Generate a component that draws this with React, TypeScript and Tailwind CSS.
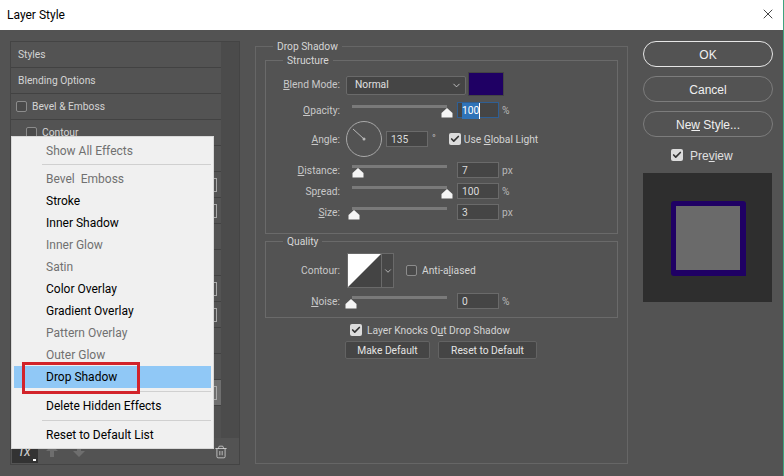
import type { ReactNode } from 'react'
import { X, Check, ChevronDown, Trash2 } from 'lucide-react'

// rows under the open menu keep only what still shows beside it
const listRows = [
  { name: 'styles', label: 'Styles' },
  { name: 'blending', label: 'Blending Options' },
  { name: 'bevel', label: 'Bevel & Emboss', box: true },
  { name: 'contour', label: 'Contour', box: true, indent: true },
  { name: 'texture' },
  { name: 'stroke', plus: true },
  { name: 'inner-shadow', plus: true },
  { name: 'inner-glow' },
  { name: 'satin' },
  { name: 'color-overlay', plus: true },
  { name: 'gradient-overlay', plus: true },
  { name: 'pattern-overlay' },
  { name: 'outer-glow' },
  { name: 'drop-shadow', plus: true, selected: true },
]

const effectItems = [
  { label: 'Bevel  Emboss', off: true },
  { label: 'Stroke' },
  { label: 'Inner Shadow' },
  { label: 'Inner Glow', off: true },
  { label: 'Satin', off: true },
  { label: 'Color Overlay' },
  { label: 'Gradient Overlay' },
  { label: 'Pattern Overlay', off: true },
  { label: 'Outer Glow', off: true },
  { label: 'Drop Shadow', active: true },
]

function CheckBox({ checked = false }: { checked?: boolean }) {
  if (checked) {
    return (
      <span className="flex h-[12px] w-[12px] shrink-0 items-center justify-center rounded-[2px] bg-[#dcdcdc]">
        <Check size={10} strokeWidth={4} className="text-[#333]" />
      </span>
    )
  }
  return <span className="h-[11px] w-[11px] shrink-0 rounded-[2px] border border-[#8c8c8c] bg-[#4a4a4a]" />
}

function Slider({ thumb }: { thumb: string }) {
  return (
    <div className="relative ml-[11px] mt-[3px] h-[3px] w-[95px] self-start bg-[#7a7a7a]">
      <svg width="12" height="10" viewBox="0 0 12 10" className={`absolute top-[3px] ${thumb}`}>
        <path d="M6 0 L11.5 5 V9.5 H0.5 V5 Z" fill="#f4f4f4" />
      </svg>
    </div>
  )
}

function Field({ value, focused = false }: { value: string; focused?: boolean }) {
  return (
    <div
      className={`flex h-[16px] w-[42px] items-center border bg-[#454545] pl-[4px] pt-[2px] text-[#dcdcdc] ${
        focused ? 'border-[#2f5f94]' : 'border-[#6a6a6a]'
      }`}
    >
      {focused ? <span className="border-r border-white bg-[#2f73b8] text-white">{value}</span> : value}
    </div>
  )
}

function Label({ before, u, after }: { before?: string; u: string; after: string }) {
  return (
    <span className="w-[75px] shrink-0 pr-px pt-[2px] text-right text-[#c8c8c8]">
      {before}
      <span className="underline">{u}</span>
      {after}
    </span>
  )
}

function SliderRow({
  label,
  value,
  unit,
  thumb,
  focused,
  className,
}: {
  label: ReactNode
  value: string
  unit: string
  thumb: string
  focused?: boolean
  className: string
}) {
  return (
    <div className={`flex h-[16px] items-center ${className}`}>
      {label}
      <Slider thumb={thumb} />
      <div className="ml-[10px]">
        <Field value={value} focused={focused} />
      </div>
      <span className="ml-[3px] pt-[2px] text-[#b8b8b8]">{unit}</span>
    </div>
  )
}

function Legend({ title, className }: { title: string; className: string }) {
  return <span className={`absolute bg-[#535353] px-[4px] leading-[14px] text-[#d6d6d6] ${className}`}>{title}</span>
}

function SideButton({ children, strong = false }: { children: ReactNode; strong?: boolean }) {
  return (
    <div
      className={`flex h-[26px] w-[130px] items-center justify-center rounded-[13px] border pt-[2px] font-['Liberation_Sans',sans-serif] text-[12px] text-[#f0f0f0] ${
        strong ? 'border-[#e6e6e6]' : 'border-[#7c7c7c]'
      }`}
    >
      {children}
    </div>
  )
}

function PlainButton({ children, width }: { children: ReactNode; width: string }) {
  return (
    <div className={`flex h-[18px] items-center justify-center rounded-[2px] border border-[#636363] bg-[#454545] pt-[2px] text-[#e4e4e4] ${width}`}>
      {children}
    </div>
  )
}

function EffectsMenu() {
  return (
    <div className="absolute left-[11px] top-[136px] flex h-[313px] w-[203px] flex-col border border-[#d8d8d8] bg-[#f0f0f0] px-[2px] pt-[2px] font-['Roboto',sans-serif] text-[12px] text-black">
      <div className="flex h-[25px] items-center pb-[2px] pl-[32px] text-[#707070]">Show All Effects</div>
      <div className="ml-[28px] h-px bg-[#d0d0d0]" />
      <div className="mt-[3px]">
        {effectItems.map((item) => (
          <div
            key={item.label}
            className={`flex h-[22px] items-center pl-[32px] whitespace-pre ${item.off ? 'text-[#707070]' : ''} ${
              item.active ? 'bg-[#90c8f6]' : ''
            }`}
          >
            {item.label}
          </div>
        ))}
      </div>
      <div className="ml-[28px] mt-[3px] h-px bg-[#d0d0d0]" />
      <div className="mt-[3px] flex h-[22px] items-center pl-[32px]">Delete Hidden Effects</div>
      <div className="ml-[28px] mt-[3px] h-px bg-[#d0d0d0]" />
      <div className="mt-[3px] flex h-[22px] items-center pl-[32px]">Reset to Default List</div>
      <div className="absolute left-[10px] top-[225px] h-[32px] w-[118px] border-[3px] border-[#d2232a]" />
    </div>
  )
}

export default function App() {
  return (
    <div className="relative flex h-[476px] w-[784px] flex-col overflow-hidden border-r border-[#3fa37e] bg-[#535353] font-['Roboto',sans-serif] text-[10.25px]">
      <header className="flex h-[30px] shrink-0 items-center justify-between bg-white pl-[7px] pr-[7px] text-[12px] text-black">
        <span>Layer Style</span>
        <X size={16} strokeWidth={1.1} className="mb-[2px]" />
      </header>

      <div className="flex min-h-0 flex-1 pl-[10px] pt-[11px]">
        {/* effects list */}
        <aside className="flex h-[424px] w-[230px] shrink-0 flex-col border border-[#444]">
          <div className="flex h-[396px] shrink-0 bg-[#4b4b4b] pr-[2px]">
            <div className="w-[210px] bg-[#505050]">
              {listRows.map((row) => (
                <div
                  key={row.name}
                  className={`flex h-[26px] items-center gap-[5px] border-b border-[#424242] text-[#d4d4d4] ${
                    row.indent ? 'pl-[15px]' : row.box ? 'pl-[5px]' : 'pl-[7px]'
                  } ${row.selected ? 'bg-[#6f6f6f]' : 'bg-[#535353]'}`}
                >
                  {row.box ? <CheckBox /> : null}
                  {row.label ? <span>{row.label}</span> : null}
                  {row.plus ? <span className="ml-auto mr-[4px] h-[14px] w-[13px] border border-[#aaa]" /> : null}
                </div>
              ))}
            </div>
          </div>
          <div className="flex min-h-0 flex-1 items-center pl-px pr-[11px]">
            <div className="relative flex h-[23px] w-[26px] items-center justify-center bg-[#333] text-[14px] italic text-[#cfcfcf]">
              fx
              <span className="absolute bottom-[2px] right-[2px] h-[2px] w-[3px] bg-white" />
            </div>
            <svg width="12" height="12" viewBox="0 0 12 12" className="ml-[8px]">
              <path d="M6 0 L12 6 H8 V12 H4 V6 H0 Z" fill="#6e6e6e" />
            </svg>
            <svg width="12" height="12" viewBox="0 0 12 12" className="ml-[15px]">
              <path d="M6 12 L12 6 H8 V0 H4 V6 H0 Z" fill="#6e6e6e" />
            </svg>
            <Trash2 size={14} strokeWidth={1.3} className="ml-auto mt-px text-[#dcdcdc]" />
          </div>
        </aside>

        {/* settings */}
        <main className="relative ml-[15px] mt-[5px] h-[418px] w-[373px] shrink-0 border border-[#666] pl-[9px] pr-[9px]">
          <Legend title="Drop Shadow" className="left-[17px] top-[-7px]" />

          <section className="relative mt-[13px] h-[174px] w-[353px] border border-[#6a6a6a]">
            <Legend title="Structure" className="left-[17px] top-[-7px]" />
            <div className="mt-[11px] flex h-[24px] items-center">
              <Label u="B" after="lend Mode:" />
              <div className="ml-[5px] mt-[2px] flex h-[19px] w-[120px] items-center justify-between rounded-[2px] border border-[#6a6a6a] bg-[#454545] pl-[8px] pr-[3px] text-[#e0e0e0]">
                Normal
                <ChevronDown size={11} className="text-[#c8c8c8]" />
              </div>
              <div className="ml-[2px] h-[24px] w-[36px] border border-[#444] bg-[#1f0064]" />
            </div>

            <SliderRow
              className="mt-[6px]"
              label={<Label u="O" after="pacity:" />}
              value="100"
              unit="%"
              thumb="right-[-6px]"
              focused
            />

            <div className="mt-[3px] flex h-[36px] items-center">
              <Label u="A" after="ngle:" />
              <svg width="36" height="36" viewBox="0 0 36 36" className="ml-[5px]">
                <circle cx="18" cy="18" r="17.5" fill="none" stroke="#a8a8a8" />
                <path d="M18 18 L7 8" stroke="#b8b8b8" />
                <circle cx="18" cy="18" r="1.5" fill="#b8b8b8" />
              </svg>
              <div className="ml-[4px]">
                <Field value="135" />
              </div>
              <span className="ml-[4px] text-[#b8b8b8]">°</span>
              <div className="ml-[13px] flex items-center gap-[3px]">
                <CheckBox checked />
                <span className="pt-[2px] text-[#d4d4d4]">
                  Use <span className="underline">G</span>lobal Light
                </span>
              </div>
            </div>

            <SliderRow className="mt-[5px]" label={<Label u="D" after="istance:" />} value="7" unit="px" thumb="left-[0px]" />
            <SliderRow
              className="mt-[5px]"
              label={<Label before="Sp" u="r" after="ead:" />}
              value="100"
              unit="%"
              thumb="right-[-6px]"
            />
            <SliderRow className="mt-[5px]" label={<Label u="S" after="ize:" />} value="3" unit="px" thumb="left-[-4px]" />
          </section>

          <section className="relative mt-[7px] h-[77px] w-[353px] border border-[#6a6a6a]">
            <Legend title="Quality" className="left-[17px] top-[-7px]" />
            <div className="mt-[11px] flex h-[35px] items-center">
              <span className="w-[75px] shrink-0 pr-px text-right text-[#c8c8c8]">Contour:</span>
              <div className="ml-[6px] flex h-[35px] border border-[#6a6a6a]">
                <svg width="33" height="33" viewBox="0 0 33 33">
                  <rect width="33" height="33" fill="#444" />
                  <path d="M0 0 H33 L0 33 Z" fill="#fff" />
                </svg>
                <div className="flex w-[12px] items-center justify-center border-l border-[#6a6a6a] bg-[#474747]">
                  <ChevronDown size={10} className="text-[#c8c8c8]" />
                </div>
              </div>
              <div className="ml-[12px] flex items-center gap-[5px]">
                <CheckBox />
                <span className="text-[#d4d4d4]">
                  Anti-a<span className="underline">l</span>iased
                </span>
              </div>
            </div>
            <SliderRow className="mt-[5px]" label={<Label u="N" after="oise:" />} value="0" unit="%" thumb="left-[-7px]" />
          </section>

          <div className="ml-[85px] mt-[5px] flex h-[14px] items-center gap-[5px] text-[#d4d4d4]">
            <CheckBox checked />
            <span className="pt-[2px]">
              Layer Knocks O<span className="underline">u</span>t Drop Shadow
            </span>
          </div>
          <div className="ml-[80px] mt-[4px] flex gap-[8px]">
            <PlainButton width="w-[85px]">Make Default</PlainButton>
            <PlainButton width="w-[99px]">Reset to Default</PlainButton>
          </div>
        </main>

        {/* actions */}
        <div className="ml-[15px] flex w-[130px] shrink-0 flex-col">
          <SideButton strong>OK</SideButton>
          <div className="mt-[9px]">
            <SideButton>Cancel</SideButton>
          </div>
          <div className="mt-[9px]">
            <SideButton>
              <span>
                Ne<span className="underline">w</span> Style...
              </span>
            </SideButton>
          </div>
          <div className="mt-[11px] flex h-[14px] items-center gap-[7px] pl-[28px] font-['Liberation_Sans',sans-serif] text-[12px] text-[#e0e0e0]">
            <CheckBox checked />
            <span className="pt-[2px]">
              Pre<span className="underline">v</span>iew
            </span>
          </div>
          <div className="mt-[11px] flex h-[129px] w-[129px] items-center justify-center bg-[#2e2e2e] pl-[2px] pt-[2px]">
            <div className="h-[75px] w-[75px] rounded-[3px] rounded-br-none bg-[#1f0064] p-[5px]">
              <div className="h-[64px] w-[64px] bg-[#6a6a6a]" />
            </div>
          </div>
        </div>
      </div>

      <EffectsMenu />
    </div>
  )
}
